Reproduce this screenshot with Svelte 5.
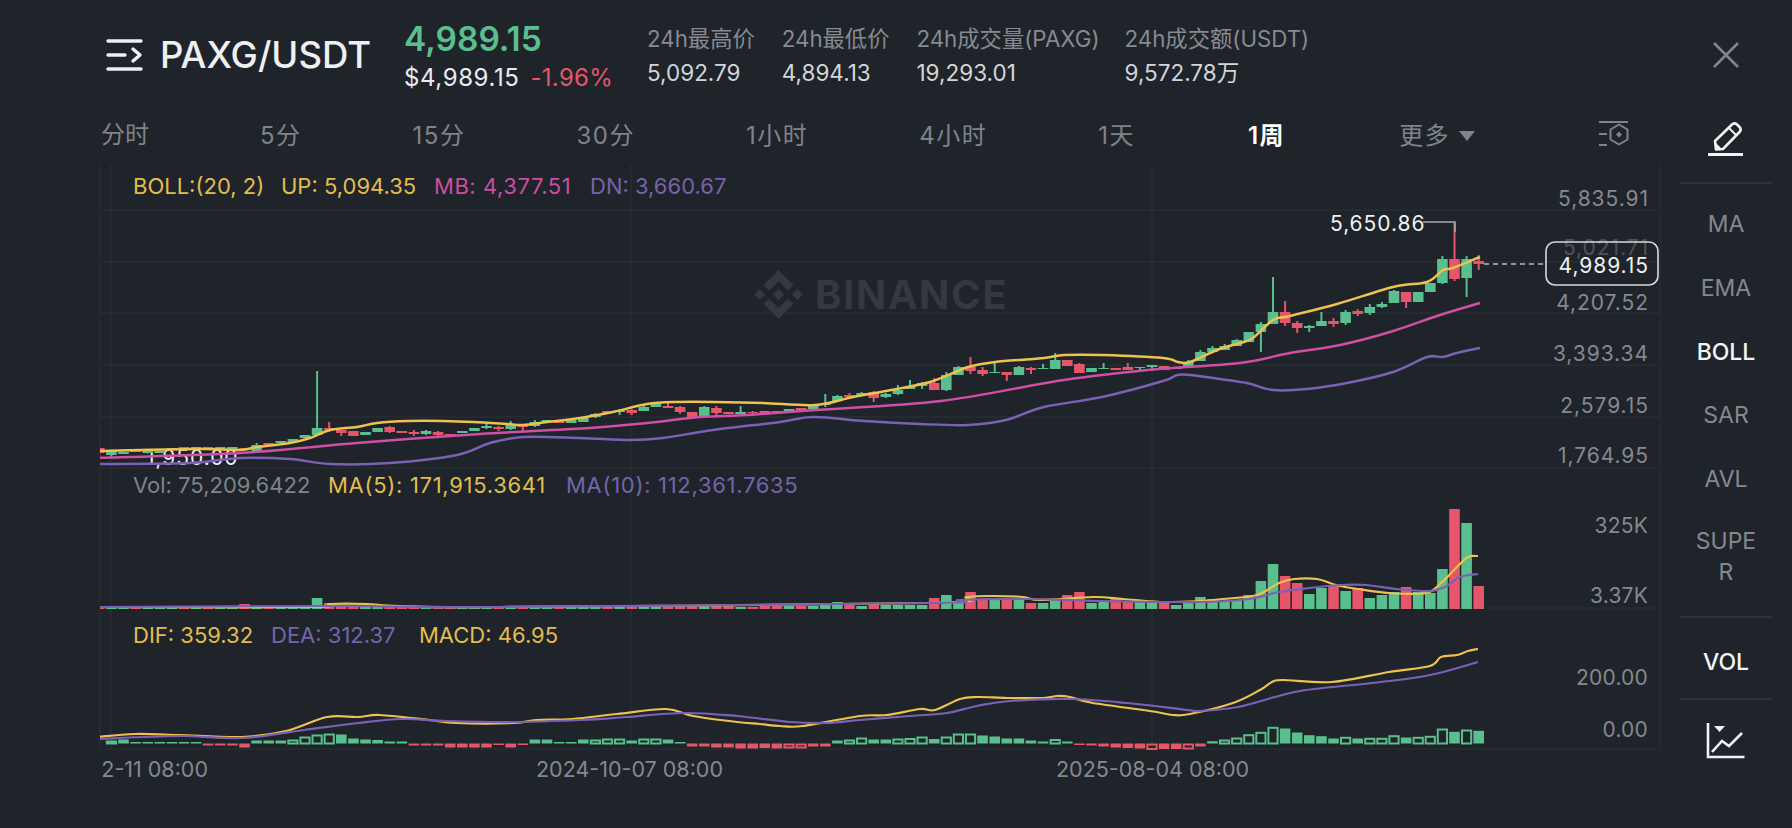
<script>
  const G = 'g', R = 'r';
  const stepX = 12.1, lastX = 1478.7;
  const xOf = (k) => lastX - stepX * k;
  // top, bottom, wick top, wick bottom, colour — listed from the newest candle back
  const candles = [
    [261,264,255,270,R],[259,278,256,297,G],[259,279,222,281,R],[259,283,256,284,G],[283,292,283,292,G],
    [292,302,292,302,G],[292,302,292,308,R],[291,303,290,303,G],[304,307,302,308,G],[307,313,304,315,G],
    [311,314,309,316,R],[312,323,310,325,G],[321,324,318,327,R],[321,326,312,326,G],[326,328,325,332,G],
    [323,328,321,333,R],[312,323,301,326,R],[312,324,277,324,G],[324,332,322,352,G],[332,342,332,342,G],
    [340,346,339,346,G],[346,350,344,350,G],[348,352,346,352,G],[352,361,350,361,G],[362,367,360,368,G],
    [367,369,367,369,G],[366,370,366,370,R],[365,367,365,371,G],[367,368,367,372,G],[367,370,363,370,R],
    [368,370,368,370,R],[368,369,363,369,G],[368,372,368,372,G],[364,373,363,373,R],[360,366,360,366,R],
    [360,369,353,369,G],[368,369,364,369,G],[368,370,367,374,R],[367,375,366,375,G],[372,375,372,381,R],
    [372,373,363,373,G],[370,374,367,376,R],[367,371,357,374,R],[367,375,366,375,G],[375,390,372,391,G],
    [383,390,378,390,R],[383,386,382,389,G],[387,389,380,389,G],[390,394,385,395,G],[394,397,393,398,G],
    [392,398,391,402,R],[393,395,392,396,G],[395,397,393,398,R],[396,401,395,402,G],[403,405,394,407,G],
    [405,409,405,409,G],[408,412,408,412,R],[409,412,409,412,G],[411,413,411,413,R],[411,413,411,413,R],
    [412,413,411,414,R],[412,414,406,414,G],[412,414,412,414,R],[408,413,406,415,R],[407,416,406,416,G],
    [412,417,412,417,R],[407,412,406,414,R],[406,408,403,408,R],[404,407,404,407,G],[407,411,406,411,G],
    [410,413,409,415,R],[410,412,409,415,G],[411,413,411,413,R],[414,417,413,418,G],[418,422,417,422,G],
    [420,423,420,423,G],[421,423,421,423,R],[420,422,420,422,G],[422,426,420,427,G],[424,427,424,431,R],
    [425,429,421,430,G],[427,429,426,431,R],[426,428,424,429,G],[428,431,428,431,G],[431,433,431,433,G],
    [434,436,434,436,R],[432,435,431,436,R],[431,434,430,435,G],[432,434,430,436,R],[431,433,431,433,R],
    [427,432,426,433,R],[428,432,428,432,G],[432,435,432,435,G],[431,436,431,436,R],[430,433,430,436,R],
    [428,430,422,432,R],[428,435,371,435,G],[435,438,435,438,G],[439,442,439,442,G],[441,443,441,443,G],
    [443,445,443,445,R],[445,451,443,451,G],[448,450,448,450,R],[447,449,447,449,G],[447,449,447,449,G],
    [447,449,447,449,R],[447,449,447,449,G],[447,449,447,449,R],[448,450,448,450,G],[451,453,451,453,G],
    [451,453,451,453,G],[449,452,449,452,R],[452,454,452,454,G],[451,455,450,457,G],[448,453,447,456,R]
  ];
  const volTops = [
    586,523,509,569,593,592,587,592,595,598,588,591,585,588,594,583,576,564,581,595,
    600,601,599,597,603,605,602,603,602,602,599,602,603,592,595,601,603,603,600,599,
    599,600,592,603,595,598,605,605,605,605,604,606,604,602,604,606,606,606,606,606,
    607,607,606,606,606,605,606,606,606,606,606,606,607,607,606,606,606,606,606,606,
    606,607,607,607,607,607,607,607,607,607,607,606,607,606,606,603,598,606,607,607,
    607,606,604,607,607,607,607,607,607,607,607,607,607,607,607
  ];
  // height above (+) or below (-) the zero line, hollow flag
  const macd = [
    [12.7],[14,1],[11.7],[15,1],[7.7,1],[6.7,1],[6],[8.3,1],[5.7,1],[5.7,1],[5],[6.7,1],[5],[7.3],[8.3],[11],[15],[16.7,1],[11.7,1],[9.3,1],[6,1],[4,1],[2.3],
    [-3],[-5,1],[-5.5],[-5.5],[-5.5,1],[-5],[-4.5],[-4],[-3],[-2],[-1.5],
    [2],[4.5,1],[2],[3],[5],[5],[7],[8],[10,1],[10,1],[7,1],[4.5],[7,1],[5.5,1],[5,1],[4],[4],[6,1],[4,1],[3],
    [-3],[-3],[-4,1],[-4,1],[-5],[-4.5],[-5],[-5],[-4],[-4],[-3],[-3],
    [1.5],[4],[5,1],[5,1],[3],[5,1],[5,1],[4,1],[4],[1.5],[1.5],[4],[4],
    [-1.5],[-4],[-1.5],[-4],[-4],[-4],[-4],[-2],[-2],[-2],
    [2],[2],[3.5],[4],[5],[9],[10,1],[9,1],[7,1],[4,1],[3],[3],[3],
    [-4],[-2],[-2],[-2],[1.5],[1.5],[1.5],[1.5],[1.5],[1.5],[4],[3,1]
  ];
  // Catmull-Rom through the sampled points, so the averages read as curves
  function smooth(str) {
    const p = str.split(' ').map((s) => s.split(',').map(Number));
    let d = `M${p[0][0]} ${p[0][1]}`;
    for (let i = 0; i < p.length - 1; i++) {
      const a = p[i - 1] || p[i], b = p[i], c = p[i + 1], e = p[i + 2] || c;
      const t = 1 / 6;
      const c1x = b[0] + (c[0] - a[0]) * t, c1y = b[1] + (c[1] - a[1]) * t;
      const c2x = c[0] - (e[0] - b[0]) * t, c2y = c[1] - (e[1] - b[1]) * t;
      d += `C${c1x.toFixed(1)} ${c1y.toFixed(1)} ${c2x.toFixed(1)} ${c2y.toFixed(1)} ${c[0]} ${c[1]}`;
    }
    return d;
  }
  const lines = [
    { c: 'yel', p: '96,451 200,449 240,450 257,447 290,443 310,438 330,430 357,427 377,423 407,421 443,421 473,422 507,424 523,425 547,422 580,418 613,412 647,404 677,402 713,402 763,403 815,405 853,397 891,390 930,382 968,367 995,362 1044,358 1064,355 1102,355 1163,358 1178,362 1190,362 1217,350 1240,343 1253,338 1273,320 1290,316 1337,304 1393,287 1427,282 1443,270 1453,268 1480,257' },
    { c: 'pnk', p: '96,458 240,453 357,443 480,434 590,428 647,423 700,417 747,415 815,410 941,401 1064,380 1159,369 1240,363 1290,353 1340,345 1390,332 1440,315 1480,303' },
    { c: 'pur', p: '96,464 190,463 240,458 290,459 330,464 390,463 457,455 490,443 523,437 580,438 630,440 663,438 713,430 780,422 813,417 865,421 920,424 968,425 1006,420 1044,407 1102,397 1163,381 1177,375 1190,375 1220,379 1247,383 1273,390 1307,389 1347,383 1393,372 1427,357 1443,357 1457,353 1480,348' },
    { c: 'yel thin', p: '96,607 310,607 330,604 367,604 400,606 500,607 927,603 967,597 993,596 1023,597 1040,600 1093,597 1123,599 1160,602 1200,601 1223,599 1257,595 1279,583 1294,579 1317,579 1336,585 1358,589 1389,593 1426,593 1441,583 1457,567 1468,557 1478,556' },
    { c: 'pur thin', p: '96,607 340,606 500,607 927,603 960,600 1027,599 1100,601 1200,602 1249,599 1279,592 1309,588 1340,585 1366,585 1396,589 1430,591 1445,587 1460,577 1478,574' },
    { c: 'yel thin', p: '96,737 135,734 179,735 242,737 286,731 327,717 358,717 380,715 429,720 456,723 514,723 536,720 572,719 617,714 666,709 693,716 737,722 760,724 780,726 803,726 860,716 887,715 920,709 935,710 960,699 977,697 1007,698 1043,698 1057,696 1070,697 1093,703 1150,711 1173,715 1190,714 1233,703 1260,690 1272,682 1283,680 1332,682 1389,672 1430,666 1441,657 1457,655 1468,651 1478,649' },
    { c: 'pur thin', p: '96,739 179,736 242,738 304,730 358,723 402,719 447,721 514,722 581,720 626,717 684,713 737,716 790,722 827,723 860,720 910,716 947,713 977,706 1010,701 1070,699 1127,703 1187,710 1200,711 1238,707 1275,697 1306,690 1381,682 1430,675 1478,662' }
  ].map((l) => ({ c: l.c, d: smooth(l.p) }));
  const gridY = [210, 262, 313, 365, 417, 468, 608, 749];
  const gridX = [100, 111, 631, 1152, 1660];
  const priceAxis = [
    ['5,835.91', 198], ['4,207.52', 302], ['3,393.34', 353], ['2,579.15', 405], ['1,764.95', 455]
  ];
  const axis = [['325K', 525], ['3.37K', 595], ['200.00', 677], ['0.00', 729]];
  const legends = [
    { y: 187, items: [['BOLL:(20, 2)', 133, 'tyel'], ['UP: 5,094.35', 281, 'tyel'], ['MB: 4,377.51', 434, 'tpnk wide'], ['DN: 3,660.67', 590, 'tpur']] },
    { y: 486, items: [['Vol: 75,209.6422', 133, 'tgry'], ['MA(5): 171,915.3641', 328, 'tyel wider'], ['MA(10): 112,361.7635', 566, 'tpur wider']] },
    { y: 636, items: [['DIF: 359.32', 133, 'tyel'], ['DEA: 312.37', 271, 'tpur'], ['MACD: 46.95', 419, 'tyel']] }
  ];
  const stats = [
    ['24h最高价', '5,092.79'], ['24h最低价', '4,894.13'], ['24h成交量(PAXG)', '19,293.01'], ['24h成交额(USDT)', '9,572.78万']
  ];
  const tabs = ['分时', '5分', '15分', '30分', '1小时', '4小时', '1天', '1周', '更多'];
  const tools = [['MA'], ['EMA'], ['BOLL', true], ['SAR'], ['AVL']];
</script>

<div class="page">
  <div class="left">
    <header class="head">
      <svg class="menu" width="38" height="36" viewBox="0 0 38 36" aria-hidden="true">
        <path d="M2 4H35M2 18H19M2 32H35M27 12l7 6-7 6" fill="none" stroke="#eef0f3" stroke-width="3.4" stroke-linecap="round" stroke-linejoin="round" />
      </svg>
      <h1 class="pair">PAXG/USDT</h1>
      <div class="price">
        <div class="last">4,989.15</div>
        <div class="sub"><span class="usd">$4,989.15</span><span class="down">-1.96%</span></div>
      </div>
      <div class="stats">
        {#each stats as s}
          <div class="stat"><div class="lab">{s[0]}</div><div class="val">{s[1]}</div></div>
        {/each}
      </div>
    </header>

    <nav class="tabs">
      {#each tabs as t, i}
        <span class="tab" class:on={t === '1周'} class:first={i === 0} class:more={t === '更多'}>{t}</span>
      {/each}
      <span class="caret"></span>
      <svg class="cfg" width="36" height="32" viewBox="0 0 36 32" aria-hidden="true">
        <path d="M1 2H30M1 14H9M1 25H9" fill="none" stroke="#7f848a" stroke-width="2" />
        <path d="M21 4.5l8.5 5v10l-8.5 5-8.5-5v-10z" fill="none" stroke="#7f848a" stroke-width="2" stroke-linejoin="round" />
        <path d="M21 11.5l3 3-3 3-3-3z" fill="#7f848a" />
      </svg>
    </nav>

    <div class="chart">
      <svg width="1680" height="663" viewBox="0 165 1680 663">
        <defs>
          <clipPath id="plot"><rect x="100" y="165" width="1560" height="600" /></clipPath>
          <clipPath id="time"><rect x="100" y="750" width="1560" height="40" /></clipPath>
        </defs>

        {#each gridY as y}<line class="grid" x1="100" x2="1660" y1={y} y2={y} />{/each}
        {#each gridX as x}<line class="grid" x1={x} x2={x} y1="165" y2="749" />{/each}

        <g class="mark" transform="translate(754 270) scale(0.388)">
          <path d="M38.73 53.2l24.59-24.58 24.6 24.6 14.3-14.31L63.32 0 24.43 38.9zM0 63.31l14.3-14.31 14.31 14.31-14.31 14.3zM38.73 73.41l24.59 24.59 24.6-24.6 14.31 14.29L63.32 126.61 24.43 87.71l-.02-.02zM97.99 63.31l14.31-14.3 14.31 14.3-14.31 14.31zM77.83 63.3L63.32 48.78 52.59 59.51l-1.24 1.23-2.54 2.54 14.51 14.5 14.51-14.47z" />
        </g>
        <text class="marktext" x="815" y="309">BINANCE</text>

        <text class="tw paxis ghost" x="1649" y="255" text-anchor="end">5,021.71</text>
        {#each priceAxis as a}<text class="tg paxis" x="1649" y={a[1] + 8} text-anchor="end">{a[0]}</text>{/each}
        {#each axis as a}<text class="tg axis" x="1648" y={a[1] + 8} text-anchor="end">{a[0]}</text>{/each}

        <text class="tw paxis" x="146" y="465">1,950.00</text>

        <g clip-path="url(#plot)">
          {#each candles as c, k}
            <line class={c[4] === G ? 'wg' : 'wr'} x1={xOf(k)} x2={xOf(k)} y1={c[2]} y2={c[3]} />
            <rect class={c[4] === G ? 'fg' : 'fr'} x={xOf(k) - 5.3} y={c[0]} width="10.6" height={c[1] - c[0]} />
          {/each}
          {#each volTops as t, k}
            <rect class={candles[k][4] === G ? 'fg' : 'fr'} x={xOf(k) - 5.3} y={t} width="10.6" height={609 - t} />
          {/each}
          {#each macd as m, k}
            {#if m[1]}
              <rect class={m[0] > 0 ? 'hg' : 'hr'} x={xOf(k) - 4.6} y={m[0] > 0 ? 743.5 - m[0] + 1 : 743.5 + 1} width="9.2" height={Math.max(Math.abs(m[0]) - 1, 1)} />
            {:else}
              <rect class={m[0] > 0 ? 'fg' : 'fr'} x={xOf(k) - 5.3} y={m[0] > 0 ? 743.5 - m[0] : 743.5} width="10.6" height={Math.abs(m[0])} />
            {/if}
          {/each}
          {#each lines as l}
            <path class={'ln ' + l.c} d={l.d} />
          {/each}
        </g>

        <polyline class="lead" points="1423,222 1455,222 1455,232" />
        <line class="dash" x1="1484" x2="1546" y1="264" y2="264" />
        <text class="tw paxis" x="1330" y="231">5,650.86</text>

        <rect class="box" x="1546" y="242" width="112" height="43" rx="9" />
        <text class="tw paxis" x="1649" y="273" text-anchor="end">4,989.15</text>

        {#each legends as row}
          {#each row.items as it}
            <text class={'leg ' + it[2]} x={it[1]} y={row.y + 7}>{it[0]}</text>
          {/each}
        {/each}

        <g clip-path="url(#time)">
          <text class="tg time" x="208" y="777" text-anchor="end">2022-12-11 08:00</text>
        </g>
        <text class="tg time" x="536" y="777">2024-10-07 08:00</text>
        <text class="tg time" x="1056" y="777">2025-08-04 08:00</text>
      </svg>
    </div>
  </div>

  <aside class="side">
    <svg class="close" width="28" height="28" viewBox="0 0 28 28" aria-hidden="true">
      <path d="M2 2L26 26M26 2L2 26" stroke="#80858b" stroke-width="2.6" fill="none" />
    </svg>
    <svg class="pen" width="36" height="34" viewBox="0 0 36 34" aria-hidden="true">
      <path d="M8 27.5l-1-8.5L24 2.5c1.5-1.4 3.5-1.4 5 0l2.500 2.500c1.400 1.500 1.400 3.500 0 5L15 27z" fill="none" stroke="#f1f2f4" stroke-width="2.6" stroke-linejoin="round" />
      <path d="M8 21l5 5-5 1.500z" fill="#f1f2f4" />
      <path d="M21 6l7.500 7.500" stroke="#f1f2f4" stroke-width="2" />
      <path d="M0 32.500H35" stroke="#f1f2f4" stroke-width="3" />
    </svg>
    <div class="rule"></div>
    {#each tools as t}
      <div class="tool" class:active={t[1]}>{t[0]}</div>
    {/each}
    <div class="tool wrap">SUPE<br />R</div>
    <div class="rule two"></div>
    <div class="tool vol">VOL</div>
    <div class="rule three"></div>
    <svg class="draw" width="40" height="38" viewBox="0 0 40 38" aria-hidden="true">
      <path d="M2 1V35H38.500" fill="none" stroke="#f1f2f4" stroke-width="2.600" />
      <path d="M8 4H19L13.500 10z" fill="#f1f2f4" />
      <path d="M6 30L16 19l7 5 13-13" fill="none" stroke="#f1f2f4" stroke-width="2.600" />
    </svg>
  </aside>
</div>

<style>
  :global(body) { margin: 0; background: #1f232a; }
  .page {
    width: 1792px; height: 828px; overflow: hidden; display: flex;
    background: #1f232a; color: #e6e8ea;
    font-family: Inter, "Noto Sans CJK SC", sans-serif;
  }
  .left { width: 1680px; flex: none; display: flex; flex-direction: column; }
  .head { height: 106px; display: flex; align-items: flex-start; padding-left: 106px; box-sizing: border-box; }
  .menu { margin-top: 37px; flex: none; }
  .pair { margin: 35px 0 0 16px; font-size: 36.500px; line-height: 40px; font-weight: 500; color: #eef0f3; width: 244px; flex: none; }
  .price { width: 243px; padding-top: 20px; flex: none; }
  .last { font-size: 33.500px; line-height: 38px; font-weight: 600; color: #5abf8e; }
  .sub { display: flex; align-items: baseline; gap: 11px; line-height: 26px; margin-top: 7px; color: #e9ebee; }
  .usd { font-size: 24px; letter-spacing: 0.6px; }
  .down { color: #e5566a; font-size: 24px; letter-spacing: 0.3px; }
  .stats { display: flex; }
  .stat { margin-right: 25px; padding-top: 25px; }
  .stat:first-child { margin-right: 27px; }
  .stat:nth-child(2) { margin-right: 27px; }
  .lab { font-size: 22.300px; line-height: 28px; color: #868b91; }
  .val { font-size: 22.500px; line-height: 28px; margin-top: 6px; color: #d3d6d9; }
  .tabs { height: 60px; display: flex; align-items: center; gap: 111px; padding-left: 101px; font-size: 24px; letter-spacing: 1.500px; color: #7f848a; box-sizing: border-box; }
  .tab { line-height: 30px; }
  .tab.first { margin-top: -3px; letter-spacing: 0; }
  .tab.on { color: #fff; font-weight: 600; margin-left: 2px; }
  .tab.more { margin-left: 3px; }
  .caret { margin-left: -102px; width: 0; height: 0; border-left: 8px solid transparent; border-right: 8px solid transparent; border-top: 10px solid #7f848a; }
  .cfg { margin-left: 12px; flex: none; }
  .chart { flex: 1; min-height: 0; margin-top: -1px; }
  .chart svg { display: block; }
  .grid { stroke: #2c3037; stroke-width: 1; }
  .mark path { fill: #34383f; }
  .marktext { font-size: 40px; font-weight: 700; fill: #34383f; letter-spacing: 1.500px; }
  .fg { fill: #5abf8e; }
  .fr { fill: #e5566a; }
  .wg { stroke: #5abf8e; stroke-width: 2; }
  .wr { stroke: #e5566a; stroke-width: 2; }
  .hg { fill: none; stroke: #5abf8e; stroke-width: 2; }
  .hr { fill: none; stroke: #e5566a; stroke-width: 2; }
  .ln { fill: none; stroke-width: 2.500; stroke-linejoin: round; }
  .ln.thin { stroke-width: 2.200; }
  .yel { stroke: #edc24f; }
  .pnk { stroke: #cf4fa6; }
  .pur { stroke: #7a61b4; }
  .lead { fill: none; stroke: #a6a9ad; stroke-width: 1.500; }
  .dash { stroke: #b9bcbf; stroke-width: 1.500; stroke-dasharray: 5 4; }
  .box { fill: none; stroke: #d9dbdd; stroke-width: 1.600; }
  .axis { font-size: 21px; letter-spacing: 0.200px; }
  .paxis { font-size: 21px; letter-spacing: 0.950px; }
  .ghost { opacity: 0.22; }
  .time { font-size: 21.500px; }
  .leg { font-size: 22px; }
  .wide { letter-spacing: 0.550px; }
  .wider { letter-spacing: 0.700px; }
  .tw { fill: #f0f1f3; }
  .tg { fill: #85898f; }
  .tgry { fill: #7f848a; }
  .tyel { fill: #e3bd4e; }
  .tpnk { fill: #c94fa3; }
  .tpur { fill: #7664ab; }
  .side { flex: 1; display: flex; flex-direction: column; align-items: center; padding-right: 20px; font-size: 23px; color: #85898f; }
  .close { margin-top: 41px; flex: none; }
  .pen { margin-top: 53px; flex: none; }
  .rule { width: 92px; height: 2px; background: #2f333a; margin-top: 26px; flex: none; }
  .tool { height: 63.750px; line-height: 63.750px; flex: none; }
  .rule + .tool { margin-top: 9px; }
  .tool.active { color: #f3f4f5; font-weight: 500; }
  .tool.wrap { height: auto; line-height: 31px; margin-top: 14px; text-align: center; }
  .rule.two { margin-top: 28px; }
  .rule + .tool.vol { margin-top: 15px; height: 58px; line-height: 58px; color: #f3f4f5; font-weight: 500; }
  .rule.three { margin-top: 7px; }
  .draw { margin-top: 22px; flex: none; }
</style>
